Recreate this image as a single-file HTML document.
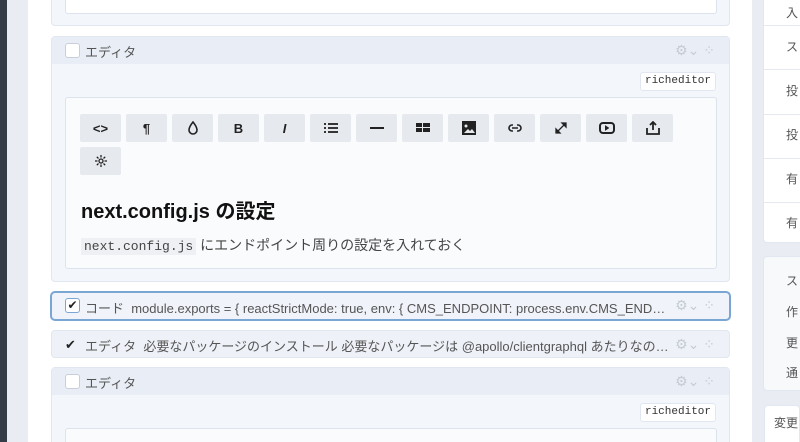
<!DOCTYPE html>
<html style="width:800px;height:442px;overflow:hidden"><head><meta charset="utf-8"><style>
*{box-sizing:border-box;margin:0;padding:0}
body{width:800px;height:442px;overflow:hidden;background:#fff;font-family:"Liberation Sans","Noto Sans CJK JP",sans-serif;position:relative;color:#333}
.a{position:absolute}
.panel{position:absolute;left:51px;width:679px;border:1px solid #e1e7f0;border-radius:4px;background:#f3f6fa}
.hdr{height:27px;background:#e9eef6;position:relative}
.cb{position:absolute;left:13px;top:6px;width:15px;height:15px;border:1px solid #c8cfd9;border-radius:3px;background:#fff}
.lbl{position:absolute;left:33px;top:5px;font-size:13px;color:#555;white-space:nowrap}
.ico{position:absolute;right:14px;top:5px;font-size:14px;color:#c5cbd3;white-space:nowrap}
.tag{position:absolute;font-family:"Liberation Mono",monospace;font-size:11px;color:#333;background:#fff;border:1px solid #e1e7f0;border-radius:3px;width:76px;height:19px;line-height:17px;text-align:center}
.btn{position:absolute;width:41px;height:28px;background:#e6e9ee;border-radius:2px;display:flex;align-items:center;justify-content:center;font-size:13px;font-weight:bold;color:#222}
.side{position:absolute;left:763px;width:40px;background:#fff;border:1px solid #e1e7f0;border-radius:4px}
.si{position:absolute;left:22px;font-size:12px;color:#555}
</style></head><body>
<div class="a" style="left:0;top:0;width:7px;height:442px;background:#333c47"></div>
<div class="a" style="left:7px;top:0;width:21px;height:442px;background:#e9edf3"></div>
<div class="a" style="left:752px;top:0;width:48px;height:442px;background:#e9edf3"></div>

<div class="panel" style="top:-5px;height:31px;"><div class="a" style="left:13px;top:0;width:652px;height:18px;background:#fff;border:1px solid #dce3ec;border-radius:3px"></div></div>

<div class="panel" style="top:36px;height:246px;">
 <div class="hdr"><div class="cb"></div><div class="lbl">エディタ</div><div class="ico">⚙⌄ ⁘</div></div>
 <div class="tag" style="left:588px;top:35px">richeditor</div>
 <div class="a" style="left:13px;top:60px;width:652px;height:172px;background:#fafbfd;border:1px solid #dce3ec;border-radius:3px">
  <div class="btn" style="left:14px;top:16px">&lt;&gt;</div>
  <div class="btn" style="left:60px;top:16px">¶</div>
  <div class="btn" style="left:106px;top:16px"><svg width="10" height="14" fill="none" stroke="#222" stroke-width="1.6"><path d="M5 1C5 1 1 6 1 9A4 4 0 0 0 9 9C9 6 5 1 5 1Z"/></svg></div>
  <div class="btn" style="left:152px;top:16px">B</div>
  <div class="btn" style="left:198px;top:16px;font-style:italic">I</div>
  <div class="btn" style="left:244px;top:16px"><svg width="14" height="10" stroke="#222" stroke-width="1.8"><line x1="0" y1="1" x2="2" y2="1"/><line x1="4" y1="1" x2="14" y2="1"/><line x1="0" y1="5" x2="2" y2="5"/><line x1="4" y1="5" x2="14" y2="5"/><line x1="0" y1="9" x2="2" y2="9"/><line x1="4" y1="9" x2="14" y2="9"/></svg></div>
  <div class="btn" style="left:290px;top:16px"><svg width="14" height="4"><rect y="1" width="14" height="2" fill="#222"/></svg></div>
  <div class="btn" style="left:336px;top:16px"><svg width="14" height="10"><rect x="0" y="0" width="6" height="4" fill="#222"/><rect x="7" y="0" width="7" height="4" fill="#222"/><rect x="0" y="5" width="6" height="4" fill="#222"/><rect x="7" y="5" width="7" height="4" fill="#222"/></svg></div>
  <div class="btn" style="left:382px;top:16px"><svg width="14" height="14"><rect width="14" height="14" fill="#222"/><circle cx="4" cy="5" r="1.5" fill="#e6e9ee"/><path d="M2 12L6 8L8 10L10 8L13 12Z" fill="#e6e9ee"/></svg></div>
  <div class="btn" style="left:428px;top:16px"><svg width="14" height="8" fill="none" stroke="#222" stroke-width="1.6"><path d="M5 1H4A3 3 0 0 0 4 7H5M9 1H10A3 3 0 0 1 10 7H9M4 4H10"/></svg></div>
  <div class="btn" style="left:474px;top:16px"><svg width="12" height="12" fill="#222" stroke="#222" stroke-width="1.3"><line x1="2" y1="10" x2="10" y2="2"/><path d="M7 1H11V5Z"/><path d="M1 7V11H5Z"/></svg></div>
  <div class="btn" style="left:520px;top:16px"><svg width="16" height="12" fill="none" stroke="#222" stroke-width="2"><rect x="1" y="1" width="14" height="10" rx="3"/><path d="M6.5 4L9.5 6L6.5 8Z" fill="#222" stroke-width="1"/></svg></div>
  <div class="btn" style="left:566px;top:16px"><svg width="14" height="14" fill="none" stroke="#222" stroke-width="1.8"><path d="M1 7V13H13V7M7 9V1M4 4L7 1L10 4"/></svg></div>
  <div class="btn" style="left:14px;top:49px"><svg width="12" height="12" stroke="#222" stroke-width="1.3" fill="none"><circle cx="6" cy="6" r="2"/><path d="M6 0V2.5M6 9.5V12M0 6H2.5M9.5 6H12M1.8 1.8L3.5 3.5M8.5 8.5L10.2 10.2M1.8 10.2L3.5 8.5M8.5 3.5L10.2 1.8"/></svg></div>
  <div class="a" style="left:15px;top:97px;font-size:20px;font-weight:bold;color:#111">next.config.js の設定</div>
  <div class="a" style="left:15px;top:137px;font-size:14px;color:#444"><span style="font-family:'Liberation Mono',monospace;background:#eef0f3;padding:1px 3px;font-size:13px">next.config.js</span> にエンドポイント周りの設定を入れておく</div>
 </div>
</div>

<div class="panel" style="top:291px;height:30px;border:2px solid #7aa6d4;border-radius:5px;background:#f0f4fa;left:50px;width:681px">
 <div class="cb" style="left:13px;top:5px;border-color:#7aa6d4;font-size:12px;line-height:13px;text-align:center;color:#222">✔</div>
 <div class="lbl" style="top:5px;width:585px;overflow:hidden;text-overflow:ellipsis">コード &nbsp;module.exports = { reactStrictMode: true, env: { CMS_ENDPOINT: process.env.CMS_ENDPOINT }}</div>
 <div class="ico" style="top:4px">⚙⌄ ⁘</div>
</div>

<div class="panel" style="top:330px;height:28px;background:#eef2f8">
 <div class="cb" style="top:6px;border:none;background:none;font-size:13px;color:#222">✔</div>
 <div class="lbl" style="width:585px;overflow:hidden;text-overflow:ellipsis">エディタ &nbsp;必要なパッケージのインストール 必要なパッケージは @apollo/clientgraphql あたりなので入れておく</div>
 <div class="ico">⚙⌄ ⁘</div>
</div>

<div class="panel" style="top:367px;height:75px;border-bottom:none;border-radius:4px 4px 0 0">
 <div class="hdr"><div class="cb"></div><div class="lbl">エディタ</div><div class="ico">⚙⌄ ⁘</div></div>
 <div class="tag" style="left:588px;top:35px">richeditor</div>
 <div class="a" style="left:13px;top:60px;width:652px;height:15px;background:#fafbfd;border:1px solid #dce3ec;border-bottom:none;border-radius:3px 3px 0 0"></div>
</div>

<div class="side" style="top:-5px;height:248px">
 <div class="si" style="top:8px">入</div>
 <div class="a" style="left:0;top:29px;width:40px;border-top:1px solid #e6eaf0"></div><div class="si" style="top:42px">ス</div>
 <div class="a" style="left:0;top:73px;width:40px;border-top:1px solid #e6eaf0"></div><div class="si" style="top:86px">投</div>
 <div class="a" style="left:0;top:118px;width:40px;border-top:1px solid #e6eaf0"></div><div class="si" style="top:130px">投</div>
 <div class="a" style="left:0;top:162px;width:40px;border-top:1px solid #e6eaf0"></div><div class="si" style="top:174px">有</div>
 <div class="a" style="left:0;top:206px;width:40px;border-top:1px solid #e6eaf0"></div><div class="si" style="top:218px">有</div>
</div>
<div class="side" style="top:256px;height:135px;background:#f7f9fb">
 <div class="si" style="top:15px">ス</div><div class="si" style="top:46px">作</div><div class="si" style="top:77px">更</div><div class="si" style="top:107px">通</div>
</div>
<div class="side" style="top:405px;height:37px;left:764px;border-bottom:none;border-radius:4px 4px 0 0;width:36px"><div class="si" style="left:9px;top:8px">変更</div></div>
</body></html>
